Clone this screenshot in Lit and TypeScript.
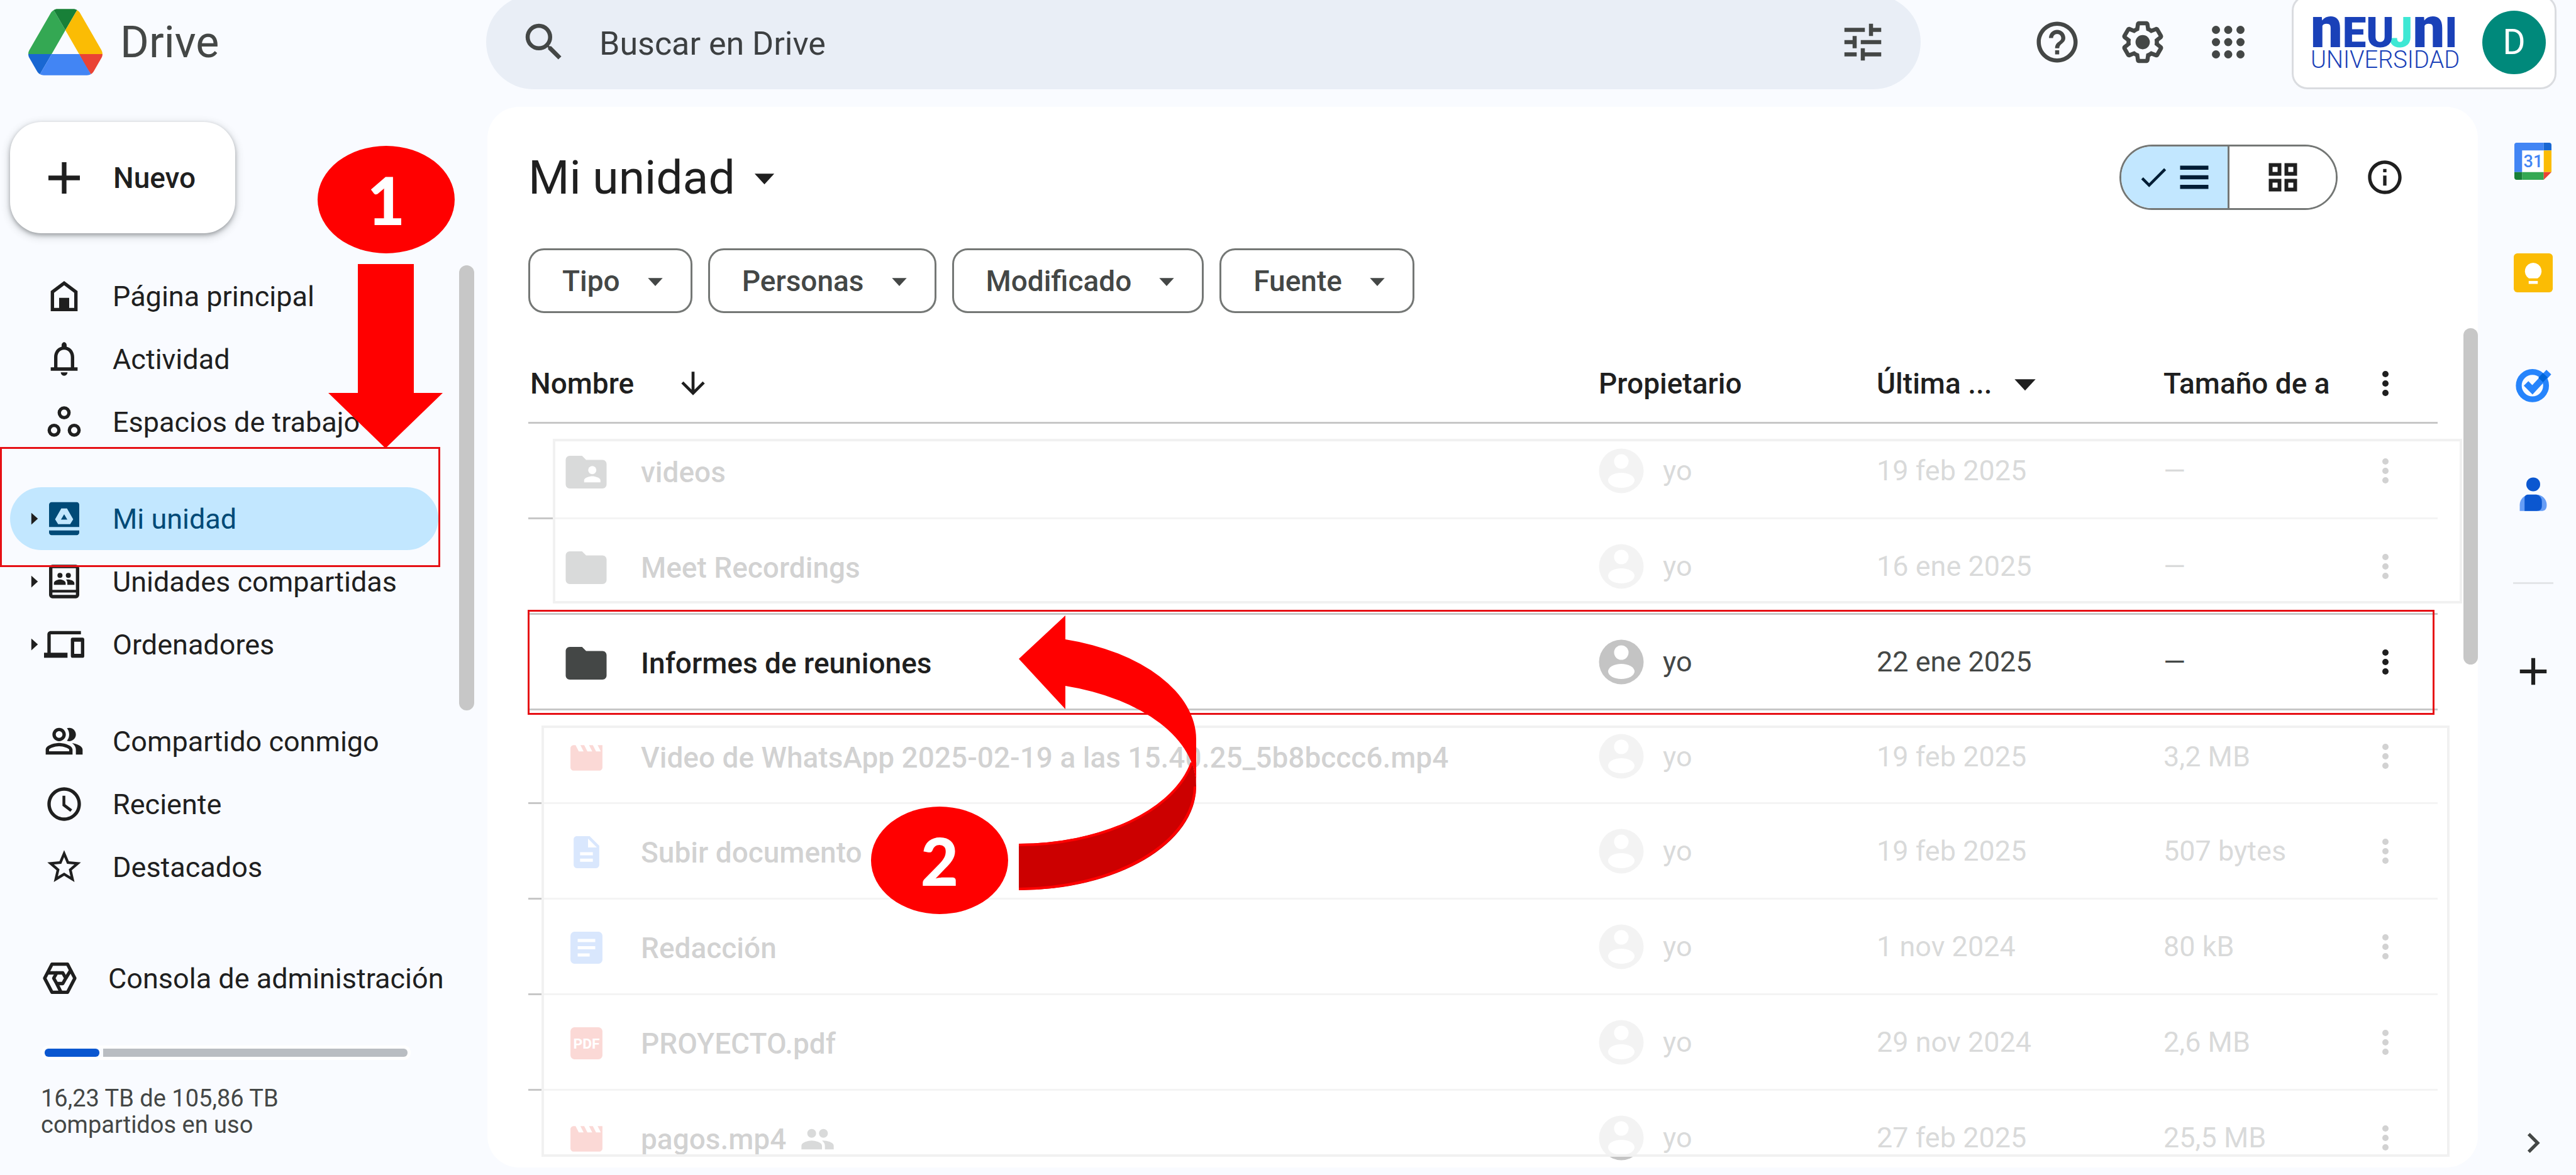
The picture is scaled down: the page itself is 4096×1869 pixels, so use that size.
import { LitElement, html, svg, css, nothing, type TemplateResult } from "lit";
import { customElement, property, state } from "lit/decorators.js";
import { classMap } from "lit/directives/class-map.js";

/* Icon drawings, all on a 24-unit grid. */
const ICONS: Record<string, TemplateResult> = {
  search: svg`<path d="M15.5 14h-.79l-.28-.27A6.47 6.47 0 0 0 16 9.5 6.5 6.5 0 1 0 9.5 16c1.61 0 3.09-.59 4.23-1.57l.27.28v.79l5 4.99L20.49 19l-4.99-5zm-6 0C7.01 14 5 11.99 5 9.5S7.01 5 9.5 5 14 7.01 14 9.5 11.99 14 9.5 14z"/>`,
  tune: svg`<path d="M3 17v2h6v-2H3zM3 5v2h10V5H3zm10 16v-2h8v-2h-8v-2h-2v6h2zM7 9v2H3v2h4v2h2V9H7zm14 4v-2H11v2h10zm-6-4h2V7h4V5h-4V3h-2v6z"/>`,
  help: svg`<path d="M11 18h2v-2h-2v2zm1-16C6.48 2 2 6.48 2 12s4.48 10 10 10 10-4.48 10-10S17.52 2 12 2zm0 18c-4.41 0-8-3.59-8-8s3.59-8 8-8 8 3.59 8 8-3.59 8-8 8zm0-14c-2.21 0-4 1.79-4 4h2c0-1.1.9-2 2-2s2 .9 2 2c0 2-3 1.75-3 5h2c0-2.25 3-2.5 3-5 0-2.21-1.79-4-4-4z"/>`,
  settings: svg`<path d="M13.85 22.25h-3.7c-.74 0-1.36-.54-1.45-1.27l-.27-1.89c-.27-.14-.53-.29-.79-.46l-1.8.72c-.7.26-1.47-.03-1.81-.65L2.2 15.53c-.35-.66-.2-1.44.36-1.88l1.53-1.19c-.01-.15-.02-.3-.02-.46 0-.15.01-.31.02-.46l-1.52-1.19c-.59-.45-.74-1.26-.37-1.88l1.85-3.19c.34-.62 1.11-.9 1.79-.63l1.81.73c.26-.17.52-.32.78-.46l.27-1.91c.09-.7.71-1.25 1.44-1.25h3.7c.74 0 1.36.54 1.45 1.27l.27 1.89c.27.14.53.29.79.46l1.8-.72c.71-.26 1.48.03 1.82.65l1.84 3.18c.36.66.2 1.44-.36 1.88l-1.52 1.19c.01.15.02.3.02.46s-.01.31-.02.46l1.52 1.19c.56.45.72 1.23.37 1.86l-1.86 3.22c-.34.62-1.11.9-1.8.63l-1.8-.72c-.26.17-.52.32-.78.46l-.27 1.91c-.1.68-.72 1.22-1.46 1.22zm-3.23-2h2.76l.37-2.55.53-.22c.44-.18.88-.44 1.34-.78l.45-.34 2.38.96 1.38-2.4-2.03-1.58.07-.56c.03-.26.06-.51.06-.78s-.03-.53-.06-.78l-.07-.56 2.03-1.58-1.39-2.4-2.39.96-.45-.35c-.42-.32-.87-.58-1.33-.77l-.52-.22-.37-2.55h-2.76l-.37 2.55-.53.21c-.44.19-.88.44-1.34.79l-.45.33-2.38-.95-1.39 2.39 2.03 1.58-.07.56a7 7 0 0 0-.06.79c0 .26.02.53.06.78l.07.56-2.03 1.58 1.38 2.4 2.39-.96.45.35c.43.33.86.58 1.33.77l.53.22.38 2.55z"/><circle cx="12" cy="12" r="3.5"/>`,
  apps: svg`<g>${[6, 12, 18].map((y) => [6, 12, 18].map((x) => svg`<circle cx=${x} cy=${y} r="2"/>`))}</g>`,
  home: svg`<path fill-rule="evenodd" d="M12 3 4 9v12h16V9l-8-6zm6 16h-3v-6H9v6H6v-9l6-4.5 6 4.5v9z"/>`,
  bell: svg`<path d="M12 22c1.1 0 2-.9 2-2h-4c0 1.1.9 2 2 2zM18 17v-6c0-3.07-1.63-5.64-4.5-6.32V3.8c0-.83-.67-1.8-1.5-1.8s-1.5.97-1.5 1.8v.88C7.64 5.36 6 7.92 6 11v6H4v2h16v-2h-2zm-2 0H8v-6c0-2.48 1.51-4.5 4-4.5s4 2.02 4 4.5v6z"/>`,
  spaces: svg`<g fill="none" stroke="currentColor" stroke-width="2"><circle cx="12" cy="6.6" r="2.9"/><circle cx="6" cy="17" r="2.9"/><circle cx="18" cy="17" r="2.9"/></g>`,
  drive: svg`<path fill-rule="evenodd" d="M4.5 2.2h15c.83 0 1.5.67 1.5 1.5V17H3V3.7c0-.83.67-1.5 1.5-1.5zM10.3 5.9l-3.7 6.5 1.8 2.9h7.2l1.8-2.9-3.7-6.5zM12 9.4l1.9 3.2h-3.8z"/><path d="M3 19h18v1.3c0 .83-.67 1.5-1.5 1.5h-15c-.83 0-1.5-.67-1.5-1.5z"/>`,
  shared: svg`<path fill-rule="evenodd" d="M5 2h14a2 2 0 0 1 2 2v16a2 2 0 0 1-2 2H5a2 2 0 0 1-2-2V4a2 2 0 0 1 2-2zm0 2v13h14V4zm0 14.6V20h14v-1.4z"/><circle cx="9.5" cy="8.3" r="1.5"/><circle cx="14.5" cy="8.3" r="1.5"/><path d="M5.9 14v-1c0-1.3 2-2.2 3.6-2.2s3.4.9 3.4 2.2v1zM13.9 14v-1.2c0-.8-.3-1.4-.8-1.9 2-.4 5 .5 5 2.1v1z"/>`,
  devices: svg`<path d="M4 6h18V4H4c-1.1 0-2 .9-2 2v11H0v3h14v-3H4V6zm19 2h-6c-.55 0-1 .45-1 1v10c0 .55.45 1 1 1h6c.55 0 1-.45 1-1V9c0-.55-.45-1-1-1zm-1 9.6h-4v-7.2h4v7.2z"/>`,
  people: svg`<path d="M16.67 13.13C18.04 14.06 19 15.32 19 17v3h4v-3c0-2.18-3.57-3.47-6.33-3.87zM15 12c2.21 0 4-1.79 4-4s-1.79-4-4-4c-.47 0-.91.1-1.33.24C14.5 5.27 15 6.58 15 8s-.5 2.73-1.33 3.76c.42.14.86.24 1.33.24zM9 12c2.21 0 4-1.79 4-4s-1.79-4-4-4-4 1.79-4 4 1.79 4 4 4zm0-6c1.1 0 2 .9 2 2s-.9 2-2 2-2-.9-2-2 .9-2 2-2zm0 7c-2.67 0-8 1.34-8 4v3h16v-3c0-2.66-5.33-4-8-4zm6 5H3v-.99C3.2 16.29 6.3 15 9 15s5.8 1.29 6 2v1z"/>`,
  clock: svg`<path d="M11.99 2C6.47 2 2 6.48 2 12s4.47 10 9.99 10C17.52 22 22 17.52 22 12S17.52 2 11.99 2zM12 20c-4.42 0-8-3.58-8-8s3.58-8 8-8 8 3.58 8 8-3.58 8-8 8zM12.7 7H11v6l4.7 3.6 1.1-1.4-4.1-3.1z"/>`,
  star: svg`<path d="M22 9.24l-7.19-.62L12 2 9.19 8.63 2 9.24l5.46 4.73L5.82 21 12 17.27 18.18 21l-1.63-7.03L22 9.24zM12 15.4l-3.76 2.27 1-4.28-3.32-2.88 4.38-.38L12 6.1l1.71 4.04 4.38.38-3.32 2.88 1 4.28L12 15.4z"/>`,
  admin: svg`<g fill="none" stroke="currentColor" stroke-width="2" stroke-linejoin="round"><path d="M3 12l4.4-8.4h9.2L21 12l-4.4 8.4H7.4z"/><path d="M8.4 12l1.8-3.2h3.6l1.8 3.2-1.8 3.2h-3.6z"/><path d="M10.2 8.8H4.8M15.6 12l3.2-5.2M10.2 15.2l2.6 5.2"/></g>`,
  plus: svg`<path d="M19.5 13.1h-6.4v6.4h-2.2v-6.4H4.5v-2.2h6.4V4.5h2.2v6.4h6.4z"/>`,
  expand: svg`<path d="M10 7.5l5 4.5-5 4.5z"/>`,
  caret: svg`<path d="M7 10l5 5.4 5-5.4z"/>`,
  arrowDown: svg`<path d="M20 12l-1.41-1.41L13 16.17V4h-2v12.17l-5.58-5.59L4 12l8 8 8-8z"/>`,
  more: svg`<circle cx="12" cy="6" r="2"/><circle cx="12" cy="12" r="2"/><circle cx="12" cy="18" r="2"/>`,
  check: svg`<path d="M9 16.17L4.83 12l-1.42 1.41L9 19 21 7l-1.41-1.41z"/>`,
  list: svg`<path d="M3 4.6h18v2.6H3zM3 10.7h18v2.6H3zM3 16.8h18v2.6H3z"/>`,
  grid: svg`<path fill-rule="evenodd" d="M3 3h8v8H3zm2.4 2.4v3.2h3.2V5.4zM13 3h8v8h-8zm2.4 2.4v3.2h3.2V5.4zM3 13h8v8H3zm2.4 2.4v3.2h3.2v-3.2zM13 13h8v8h-8zm2.4 2.4v3.2h3.2v-3.2z"/>`,
  info: svg`<path d="M11 7h2v2h-2zm0 4h2v6h-2zm1-9C6.48 2 2 6.48 2 12s4.48 10 10 10 10-4.48 10-10S17.52 2 12 2zm0 18c-4.41 0-8-3.59-8-8s3.59-8 8-8 8 3.59 8 8-3.59 8-8 8z"/>`,
  chevron: svg`<path d="M8.6 7.4L13.2 12l-4.6 4.6L10 18l6-6-6-6z"/>`,
  group: svg`<path d="M16 11c1.66 0 2.99-1.34 2.99-3S17.66 5 16 5s-3 1.34-3 3 1.34 3 3 3zm-8 0c1.66 0 2.99-1.34 2.99-3S9.66 5 8 5 5 6.34 5 8s1.34 3 3 3zm0 2c-2.33 0-7 1.17-7 3.5V19h14v-2.5c0-2.33-4.67-3.5-7-3.5zm8 0c-.29 0-.62.02-.97.05 1.16.84 1.97 1.97 1.97 3.45V19h6v-2.5c0-2.33-4.67-3.5-7-3.5z"/>`,
  folder: svg`<path d="M10 4H4c-1.1 0-2 .9-2 2v12c0 1.1.9 2 2 2h16c1.1 0 2-.9 2-2V8c0-1.1-.9-2-2-2h-8l-2-2z"/>`,
  folderShared: svg`<path d="M10 4H4c-1.1 0-2 .9-2 2v12c0 1.1.9 2 2 2h16c1.1 0 2-.9 2-2V8c0-1.1-.9-2-2-2h-8l-2-2z"/><g fill="#fff"><circle cx="15" cy="11" r="2"/><path d="M11 17v-1c0-1.33 2.67-2 4-2s4 .67 4 2v1z"/></g>`,
  movie: svg`<path fill="#ea4335" d="M19 4l2 4h-3l-2-4h-2.4l2 4h-3l-2-4H8.2l2 4h-3l-2-4H4c-1.1 0-2 .9-2 2v12c0 1.1.9 2 2 2h16c1.1 0 2-.9 2-2V4z"/>`,
  file: svg`<path fill="#4285f4" d="M14 2H6c-1.1 0-2 .9-2 2v16c0 1.1.9 2 2 2h12c1.1 0 2-.9 2-2V8l-6-6zm2 16H8v-2h8v2zm0-4H8v-2h8v2zm-3-5V3.5L18.5 9H13z"/>`,
  doc: svg`<path fill="#4285f4" d="M4.5 2h15A2.5 2.5 0 0 1 22 4.5v15a2.5 2.5 0 0 1-2.5 2.5h-15A2.5 2.5 0 0 1 2 19.5v-15A2.5 2.5 0 0 1 4.5 2zM6.5 6.5v2h11v-2zm0 4.5v2h11v-2zm0 4.5v2h7.5v-2z"/>`,
  pdf: svg`<rect x="2" y="2" width="20" height="20" rx="2.5" fill="#ea4335"/><text x="12" y="15.2" text-anchor="middle" font-family="Roboto, sans-serif" font-weight="700" font-size="9" fill="#fff">PDF</text>`,
  calendar: svg`<path fill="#fff" d="M4 4h16v16H4z"/><path fill="#4285f4" d="M1.5 0H19v5H5v14H0V1.5A1.5 1.5 0 0 1 1.5 0z"/><path fill="#1967d2" d="M19 0h3.5A1.5 1.5 0 0 1 24 1.5V5h-5z"/><path fill="#fbbc04" d="M19 5h5v14h-5z"/><path fill="#34a853" d="M5 19h14v5H5z"/><path fill="#188038" d="M0 19h5v5H1.5A1.5 1.5 0 0 1 0 22.5z"/><path fill="#ea4335" d="M19 19h5l-5 5z"/><text x="12.2" y="16" text-anchor="middle" font-family="Roboto, sans-serif" font-weight="500" font-size="11" fill="#4285f4">31</text>`,
  keep: svg`<rect width="24" height="24" rx="2.2" fill="#fbbc04"/><g fill="#fff"><path d="M12 5.8a5.2 5.2 0 0 0-2.7 9.6h5.4A5.2 5.2 0 0 0 12 5.8z"/><path d="M9.2 17h5.6v1.8H9.2z"/></g>`,
  tasks: svg`<g fill="none"><circle cx="11.5" cy="12.9" r="8.4" stroke="#2684fc" stroke-width="3.6"/><path d="M7.6 11.6l3.9 3.9L21.6 4.6" stroke="#2684fc" stroke-width="4"/><path d="M16.6 9.5l2.8-3" stroke="#0066da" stroke-width="4"/></g>`,
  contacts: svg`<circle cx="12" cy="5.6" r="4" fill="#0b57d0"/><path fill="#669df6" d="M4.2 21v-3.5a6 6 0 0 1 6-6h3.6a6 6 0 0 1 6 6c0 2.5-1.2 3.5-3.2 3.5z"/><path fill="#0b57d0" d="M7 21v-7.5c0-1.2.8-2 2-2h4.8a4 4 0 0 1 3.2 4v2.5c0 2-1 3-3 3z"/>`,
};

@customElement("d-icon")
class DIcon extends LitElement {
  @property() name = "";
  @property({ type: Number }) size = 64;
  static styles = css`
    :host { display: inline-flex; flex: none; }
    svg { display: block; fill: currentColor; overflow: visible; }
  `;
  render() {
    return html`<svg width=${this.size} height=${this.size} viewBox="0 0 24 24" aria-hidden="true">${ICONS[this.name] ?? nothing}</svg>`;
  }
}

interface NavItem { label: string; icon: string; expandable?: boolean; active?: boolean }

const NAV: NavItem[][] = [
  [
    { label: "Página principal", icon: "home" },
    { label: "Actividad", icon: "bell" },
    { label: "Espacios de trabajo", icon: "spaces" },
  ],
  [
    { label: "Mi unidad", icon: "drive", expandable: true, active: true },
    { label: "Unidades compartidas", icon: "shared", expandable: true },
    { label: "Ordenadores", icon: "devices", expandable: true },
  ],
  [
    { label: "Compartido conmigo", icon: "people" },
    { label: "Reciente", icon: "clock" },
    { label: "Destacados", icon: "star" },
  ],
];

@customElement("drive-sidebar")
class DriveSidebar extends LitElement {
  @property({ type: Number }) used = 15;
  static styles = css`
    :host { display: flex; flex-direction: column; position: relative; padding: 24px 78px 0 16px; box-sizing: border-box; color: #1f1f1f; }
    .new { align-self: flex-start; display: flex; align-items: center; height: 177px; padding: 0 63px 0 46px; border: 0; border-radius: 50px; background: #fff; font: 500 46px Roboto, sans-serif; color: #1f1f1f; gap: 38px; box-shadow: 0 3px 6px rgba(60, 64, 67, 0.4), 0 4px 12px 4px rgba(60, 64, 67, 0.14); }
    nav { display: flex; flex-direction: column; gap: 54px; margin-top: 50px; }
    .group { display: flex; flex-direction: column; }
    .item { display: flex; align-items: center; height: 100px; padding-left: 27px; border-radius: 50px; font-size: 45px; color: #1f1f1f; text-decoration: none; white-space: nowrap; }
    .item.active { background: #c2e7ff; color: #004a77; }
    .lead { flex: none; width: 27px; display: flex; align-items: center; color: #1f1f1f; }
    .lead d-icon { margin-left: -14px; }
    .item > d-icon { margin-right: 45px; }
    .console { margin: 77px 0 0 -7px; }
    .bar { display: flex; gap: 6px; height: 13px; margin: 62px 49px 0 55px; border-radius: 6px; box-shadow: 0 0 0 5px #fff; }
    .used { background: #0b57d0; border-radius: 6px; }
    .free { flex: 1; background: #b9bdc2; border-radius: 0 6px 6px 0; }
    .quota { margin: 45px 0 0 49px; font-size: 38px; line-height: 42px; color: #444746; }
    .thumb { position: absolute; left: 730px; top: 252px; width: 24px; height: 708px; border-radius: 12px; background: #c7c7c7; }
  `;
  private item(n: NavItem, extra = "row") {
    return html`<a href="#" class=${classMap({ item: true, active: !!n.active, [extra]: true })}>
      <span class="lead">${n.expandable ? html`<d-icon name="expand" size="50"></d-icon>` : nothing}</span>
      <d-icon name=${n.icon}></d-icon>${n.label}
    </a>`;
  }
  render() {
    return html`
      <button class="new"><d-icon name="plus" size="80"></d-icon>Nuevo</button>
      <nav>${NAV.map((g) => html`<div class="group">${g.map((n) => this.item(n))}</div>`)}</nav>
      ${this.item({ label: "Consola de administración", icon: "admin" }, "console")}
      <div class="bar"><div class="used" style="width:${this.used}%"></div><div class="free"></div></div>
      <div class="quota">16,23 TB de 105,86 TB<br />compartidos en uso</div>
      <div class="thumb"></div>
    `;
  }
}

interface FileRow { icon: string; size: number; name: string; date: string; bytes: string; shared?: boolean; short?: boolean }

const FILES: FileRow[] = [
  { icon: "folderShared", size: 78, name: "videos", date: "19 feb 2025", bytes: "—" },
  { icon: "folder", size: 78, name: "Meet Recordings", date: "16 ene 2025", bytes: "—" },
  { icon: "folder", size: 78, name: "Informes de reuniones", date: "22 ene 2025", bytes: "—" },
  { icon: "movie", size: 61, name: "Video de WhatsApp 2025-02-19 a las 15.40.25_5b8bccc6.mp4", date: "19 feb 2025", bytes: "3,2 MB", short: true },
  { icon: "file", size: 61, name: "Subir documento", date: "19 feb 2025", bytes: "507 bytes" },
  { icon: "doc", size: 61, name: "Redacción", date: "1 nov 2024", bytes: "80 kB" },
  { icon: "pdf", size: 61, name: "PROYECTO.pdf", date: "29 nov 2024", bytes: "2,6 MB" },
  { icon: "movie", size: 61, name: "pagos.mp4", date: "27 feb 2025", bytes: "25,5 MB", shared: true },
];

@customElement("file-list")
class FileList extends LitElement {
  static styles = css`
    :host { display: block; position: relative; }
    table { width: 100%; table-layout: fixed; border-spacing: 0; font-size: 45px; color: #444746; }
    th, td { box-sizing: border-box; padding: 0; border-bottom: 3px solid #c7c7c7; text-align: left; white-space: nowrap; overflow: hidden; }
    th { height: 125px; font-size: 46px; font-weight: 500; color: #1f1f1f; }
    td { height: 152px; }
    .short td { height: 149px; }
    .owner { width: 442px; }
    .date { width: 456px; }
    .bytes { width: 266px; }
    .menu { width: 170px; }
    .cell { display: flex; align-items: center; }
    .namehead { padding-left: 3px; gap: 66px; }
    .sort { display: flex; gap: 12px; align-items: center; }
    .file { padding: 4px 0 0 53px; gap: 48px; font-size: 46px; font-weight: 500; color: #1f1f1f; }
    .pic { width: 78px; display: flex; justify-content: center; color: #444746; }
    .label { display: flex; align-items: center; gap: 22px; }
    .label d-icon { color: #444746; }
    .who { gap: 30px; }
    .who svg { flex: none; }
    button { border: 0; background: none; padding: 0; margin-left: 57px; display: flex; color: #1f1f1f; }
    .veil { position: absolute; box-sizing: border-box; border: 4px solid #f1f1f1; background: rgba(255, 255, 255, 0.8); background-clip: padding-box; pointer-events: none; }
    .v1 { top: 149px; left: 39px; right: -39px; height: 262px; }
    .v2 { top: 605px; left: 21px; right: -19px; height: 686px; }
    .mark { position: absolute; box-sizing: border-box; border: 3px solid #e60f14; top: 421px; left: -1px; right: 5px; height: 167px; pointer-events: none; }
  `;
  render() {
    const more = html`<button aria-label="Más acciones"><d-icon name="more" size="60"></d-icon></button>`;
    return html`
      <table>
        <thead><tr>
          <th><div class="cell namehead">Nombre<d-icon name="arrowDown" size="56"></d-icon></div></th>
          <th class="owner">Propietario</th>
          <th class="date"><div class="sort">Última ...<d-icon name="caret" size="80"></d-icon></div></th>
          <th class="bytes">Tamaño de a</th>
          <th class="menu">${more}</th>
        </tr></thead>
        <tbody>${FILES.map((f) => html`<tr class=${classMap({ short: !!f.short })}>
          <td><div class="cell file"><span class="pic"><d-icon name=${f.icon} size=${f.size}></d-icon></span>
            <span class="label">${f.name}${f.shared ? html`<d-icon name="group" size="56"></d-icon>` : nothing}</span></div></td>
          <td><div class="cell who"><svg width="72" height="72" viewBox="0 0 72 72" aria-hidden="true"><circle cx="36" cy="36" r="35.5" fill="#c4c4c4"/><circle cx="36" cy="21" r="11.5" fill="#fff"/><ellipse cx="36" cy="51" rx="21" ry="12" fill="#fff"/></svg>yo</div></td>
          <td>${f.date}</td>
          <td>${f.bytes}</td>
          <td>${more}</td>
        </tr>`)}</tbody>
      </table>
      <div class="veil v1"></div>
      <div class="veil v2"></div>
      <div class="mark"></div>
    `;
  }
}

@customElement("app-root")
class AppRoot extends LitElement {
  @state() private filters = ["Tipo", "Personas", "Modificado", "Fuente"];
  static styles = css`
    :host { display: flex; flex-direction: column; position: relative; height: 100vh; overflow: hidden; background: #f9fbff; font-family: Roboto, "Open Sans", sans-serif; color: #1f1f1f; }
    button { font-family: inherit; color: inherit; }
    header { display: flex; align-items: center; height: 134px; margin-bottom: 36px; flex: none; }
    .brand { width: 728px; padding-left: 45px; display: flex; align-items: center; gap: 28px; font-size: 70px; color: #444746; text-decoration: none; }
    .brand svg { flex: none; }
    .search { flex: 1; display: flex; align-items: center; gap: 49px; height: 150px; box-sizing: border-box; padding: 0 53px; margin-right: 149px; border-radius: 75px; background: #e9eef6; color: #444746; }
    .search input { flex: 1; min-width: 0; border: 0; padding: 4px 0 0; background: none; outline: none; font: 52px Roboto, sans-serif; color: #3c3f41; }
    .search input::placeholder { color: #3c3f41; opacity: 1; }
    .icon { border: 0; background: none; padding: 0; display: flex; align-items: center; justify-content: center; color: #444746; }
    .tool { width: 136px; height: 136px; }
    .account { display: flex; align-items: center; justify-content: space-between; box-sizing: border-box; width: 421px; height: 150px; margin: 0 31px 0 33px; padding: 0 14px 0 27px; border: 3px solid #dadce0; border-radius: 25px; background: #fff; }
    .logo { display: flex; flex-direction: column; color: #1a41b8; text-align: left; }
    .word { display: flex; align-items: baseline; height: 56px; line-height: 56px; font-weight: 900; font-size: 67px; }
    .word .n { font-size: 90px; line-height: 56px; }
    .word .u { position: relative; z-index: 1; }
    .word .j { color: #3ee8d4; margin-left: -8px; }
    .sub { font-size: 38px; line-height: 44px; font-weight: 300; }
    .avatar { width: 101px; height: 101px; border-radius: 50%; background: #00897b; color: #fff; font-size: 55px; display: flex; align-items: center; justify-content: center; }
    .body { flex: 1; min-height: 0; display: flex; }
    drive-sidebar { width: 775px; flex: none; }
    main { flex: 1; min-width: 0; box-sizing: border-box; margin-bottom: 12px; padding: 60px 64px 0 65px; border-radius: 50px; background: #fff; overflow: hidden; position: relative; }
    .titlebar { display: flex; align-items: center; height: 104px; }
    h1 { margin: 0 auto 0 0; font-size: 75px; font-weight: 400; display: flex; align-items: center; gap: 9px; }
    .toggle { display: flex; box-sizing: border-box; width: 347px; height: 104px; border: 3px solid #747775; border-radius: 52px; overflow: hidden; }
    .toggle button { flex: 1; border: 0; padding: 0; background: #fff; display: flex; align-items: center; justify-content: center; gap: 8px; }
    .toggle .on { background: #c2e7ff; border-right: 3px solid #747775; color: #001d35; }
    .info { margin: 0 52px 0 43px; color: #1f1f1f; }
    .chips { display: flex; gap: 25px; margin: 61px 0 51px; }
    .chip { display: flex; align-items: center; gap: 28px; height: 103px; box-sizing: border-box; padding: 0 28px 0 51px; border: 3px solid #747775; border-radius: 25px; background: #fff; font-size: 46px; font-weight: 500; color: #444746; }
    .scroll { position: absolute; right: 0; top: 352px; width: 23px; height: 535px; border-radius: 12px; background: #c7c7c7; }
    aside { width: 137px; padding-left: 19px; margin-top: -2px; flex: none; display: flex; flex-direction: column; align-items: center; }
    aside .icon { width: 120px; height: 177px; flex: none; }
    aside hr { width: 64px; height: 3px; margin: 50px 0; border: 0; background: #e3e5e8; }
    aside .add { color: #1f1f1f; }
    aside .collapse { margin-top: auto; height: 102px; }
    .note { position: absolute; pointer-events: none; }
    .badge { width: 218px; height: 171px; border-radius: 50%; background: #f00; color: #fff; font: 900 104px/171px Lato, sans-serif; text-align: center; }
    .b1 { left: 505px; top: 232px; }
    .b2 { left: 1385px; top: 1283px; }
    .down { left: 522px; top: 420px; }
    .curve { left: 1616px; top: 975px; }
    .navmark { left: 0; top: 711px; width: 700px; height: 191px; box-sizing: border-box; border: 3px solid #e60f14; }
  `;
  render() {
    return html`
      <header>
        <a class="brand" href="#">
          <svg width="118" height="106" viewBox="0 0 87.3 78" aria-hidden="true">
            <path d="m6.6 66.85 3.85 6.65c.8 1.4 1.95 2.5 3.3 3.3l13.75-23.8h-27.5c0 1.55.4 3.1 1.2 4.5z" fill="#1967d2"/>
            <path d="m43.65 25-13.75-23.8c-1.35.8-2.5 1.9-3.3 3.3l-25.4 44a9.06 9.06 0 0 0 -1.2 4.5h27.5z" fill="#34a853"/>
            <path d="m73.55 76.8c1.35-.8 2.5-1.9 3.3-3.3l1.6-2.75 7.65-13.25c.8-1.4 1.2-2.95 1.2-4.5h-27.502l5.852 11.5z" fill="#ea4335"/>
            <path d="m43.65 25 13.75-23.8c-1.35-.8-2.9-1.2-4.5-1.2h-18.5c-1.6 0-3.15.45-4.5 1.2z" fill="#188038"/>
            <path d="m59.8 53h-32.3l-13.75 23.8c1.35.8 2.9 1.2 4.5 1.2h50.8c1.6 0 3.15-.45 4.5-1.2z" fill="#4285f4"/>
            <path d="m73.4 26.5-12.7-22c-.8-1.4-1.95-2.5-3.3-3.3l-13.75 23.8 16.15 28h27.45c0-1.55-.4-3.1-1.2-4.5z" fill="#fbbc04"/>
          </svg>
          Drive
        </a>
        <div class="search">
          <d-icon name="search" size="78"></d-icon>
          <input type="text" placeholder="Buscar en Drive" aria-label="Buscar en Drive" />
          <button class="icon" aria-label="Búsqueda avanzada"><d-icon name="tune" size="78"></d-icon></button>
        </div>
        <button class="icon tool" aria-label="Ayuda"><d-icon name="help" size="78"></d-icon></button>
        <button class="icon tool" aria-label="Configuración"><d-icon name="settings" size="78"></d-icon></button>
        <button class="icon tool" aria-label="Aplicaciones"><d-icon name="apps" size="78"></d-icon></button>
        <button class="account" aria-label="Cuenta">
          <span class="logo">
            <span class="word"><span class="n">n</span><span>E</span><span class="u">U</span><span class="j">J</span><span class="n">n</span><span>I</span></span>
            <span class="sub">UNIVERSIDAD</span>
          </span>
          <span class="avatar">D</span>
        </button>
      </header>
      <div class="body">
        <drive-sidebar></drive-sidebar>
        <main>
          <div class="titlebar">
            <h1>Mi unidad<d-icon name="caret" size="75"></d-icon></h1>
            <div class="toggle">
              <button class="on" aria-label="Lista"><d-icon name="check" size="54"></d-icon><d-icon name="list" size="60"></d-icon></button>
              <button aria-label="Cuadrícula"><d-icon name="grid" size="60"></d-icon></button>
            </div>
            <button class="icon info" aria-label="Detalles"><d-icon name="info" size="64"></d-icon></button>
          </div>
          <div class="chips">${this.filters.map((f) => html`<button class="chip">${f}<d-icon name="caret" size="56"></d-icon></button>`)}</div>
          <file-list></file-list>
          <div class="scroll"></div>
        </main>
        <aside>
          <button class="icon" aria-label="Calendar"><d-icon name="calendar" size="59"></d-icon></button>
          <button class="icon" aria-label="Keep"><d-icon name="keep" size="62"></d-icon></button>
          <button class="icon" aria-label="Tasks"><d-icon name="tasks" size="62"></d-icon></button>
          <button class="icon" aria-label="Contactos"><d-icon name="contacts" size="66"></d-icon></button>
          <hr />
          <button class="icon add" aria-label="Añadir"><d-icon name="plus" size="68"></d-icon></button>
          <button class="icon collapse" aria-label="Ocultar panel"><d-icon name="chevron" size="64"></d-icon></button>
        </aside>
      </div>
      <div class="note navmark"></div>
      <div class="note badge b1">1</div>
      <svg class="note down" width="184" height="294" viewBox="0 0 184 294" aria-hidden="true"><path fill="#f00" d="M47 0h89v205h46L91 293 0 205h47z"/></svg>
      <svg class="note curve" width="292" height="446" viewBox="0 0 292 446" aria-hidden="true">
        <path fill="#c00" d="M4 367A282 165 0 0 0 279 238Q286 255 286 276A282 165 0 0 1 4 441z"/>
        <path fill="none" stroke="#f00" stroke-width="4" d="M4 369A282 165 0 0 0 279 238M284 276A282 165 0 0 1 4 439"/>
        <path fill="#f00" d="M4 73L78 4V42A282 165 0 0 1 286 201V276A282 165 0 0 0 78 116V153z"/>
      </svg>
      <div class="note badge b2">2</div>
    `;
  }
}
